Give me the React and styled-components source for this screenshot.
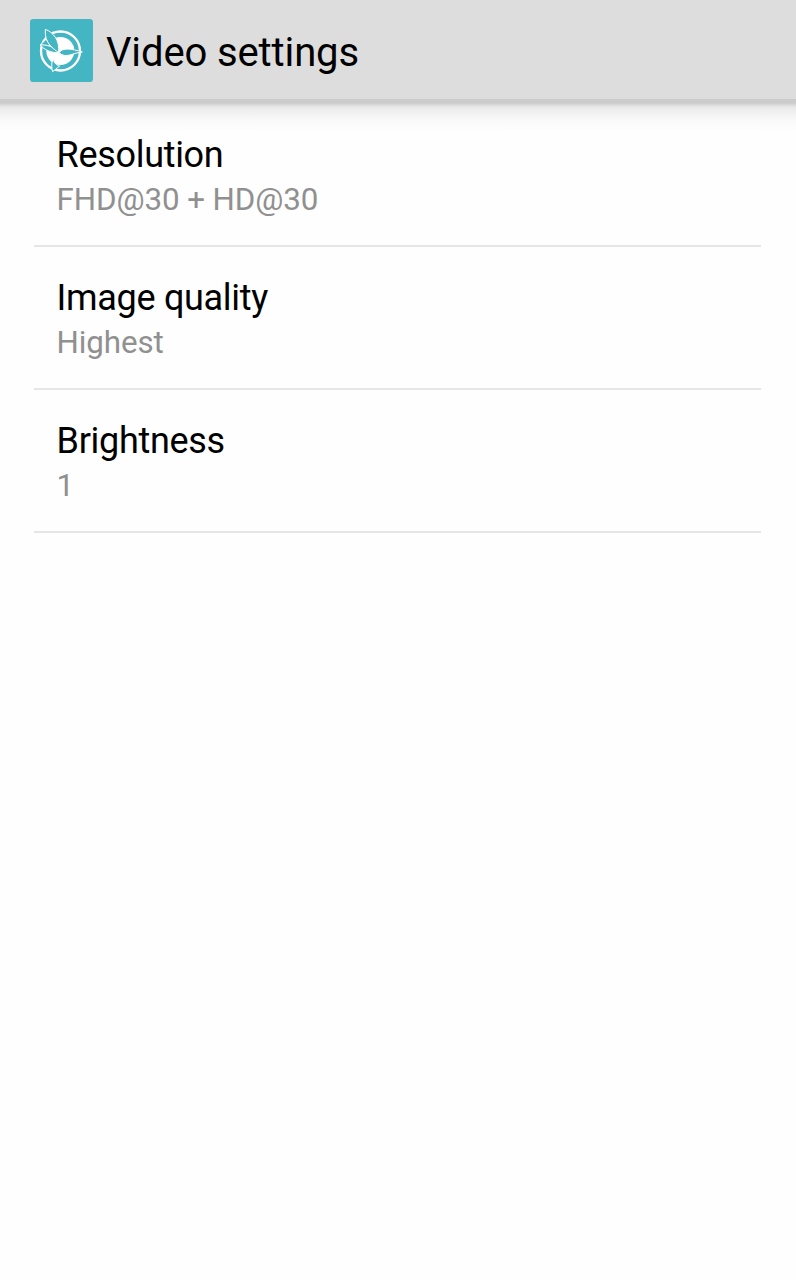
import styled, { createGlobalStyle } from "styled-components";

const GlobalStyle = createGlobalStyle`
  body {
    margin: 0;
    background-color: #fefefe;
    font-family: Roboto, "Noto Sans", sans-serif;
  }
`;

const Container = styled.div`
  display: flex;
  flex-direction: column;
  min-height: 1280px;
`;

const Header = styled.header`
  display: flex;
  align-items: center;
  height: 99px;
  padding: 1px 30px 0;
  box-sizing: border-box;
  background-color: #dddddd;
`;

const Title = styled.h1`
  margin: 5px 0 0 13px;
  font-size: 40px;
  line-height: 48px;
  font-weight: 400;
  letter-spacing: -0.12px;
  color: #000;
`;

const Logo = styled.svg`
  display: block;
  width: 63px;
  height: 63px;
`;

const Shadow = styled.div`
  height: 32px;
  background: linear-gradient(
    #cbcbcb 0,
    #cccccc 4px,
    #dadada 6px,
    #e8e8e8 8px,
    #f1f1f1 14px,
    #f9f9f9 21px,
    #fefefe 32px
  );
`;

const List = styled.ul`
  list-style: none;
  margin: 0;
  padding: 0 35px 0 34px;
`;

const Item = styled.li`
  height: ${(props) => props.height || 143}px;
  padding: ${(props) => props.top || 29}px 22.5px 0;
  box-sizing: border-box;
  border-bottom: 2px solid #e6e6e6;
`;

const Name = styled.div`
  font-size: 36px;
  line-height: 44px;
  letter-spacing: -0.3px;
  color: #000;
`;

const Value = styled.div`
  font-size: 31.3px;
  line-height: 46px;
  letter-spacing: -0.08px;
  color: #909090;
`;

const BirdLogo = () => (
  <Logo viewBox="0 0 189 189">
    <rect width="189" height="189" rx="10" fill="#44b5c3" />
    <g transform="translate(-18 -20)">
      <circle cx="109.5" cy="116" r="58.5" fill="none" stroke="#fff" strokeWidth="7" />
      <circle cx="109" cy="116" r="42" fill="#fff" />
      <g fill="#44b5c3" stroke="#fff" strokeWidth="3" strokeLinejoin="round">
        <path d="M49 98 L66 81 L83 101Z" />
        <path d="M49 98 C66 97 87 100 104 121 C82 122 61 113 49 98Z" />
        <path d="M64 51 C87 59 108 84 104 121 C90 110 60 94 64 51Z" />
        <path d="M105 121 C116 105 143 109 175 119 C149 120 126 141 105 121Z" />
        <path d="M87 139 C91 153 99 160 107 161 L86 178 C82 166 82 152 87 139Z" />
      </g>
    </g>
  </Logo>
);

const settings = [
  { name: "Resolution", value: "FHD@30 + HD@30", height: 116, top: 2 },
  { name: "Image quality", value: "Highest" },
  { name: "Brightness", value: "1" },
];

const App = () => {
  return (
    <>
      <GlobalStyle />
      <Container>
        <Header>
          <BirdLogo />
          <Title>Video settings</Title>
        </Header>
        <Shadow />
        <List>
          {settings.map((item) => (
            <Item key={item.name} height={item.height} top={item.top}>
              <Name>{item.name}</Name>
              <Value>{item.value}</Value>
            </Item>
          ))}
        </List>
      </Container>
    </>
  );
};

export default App;
